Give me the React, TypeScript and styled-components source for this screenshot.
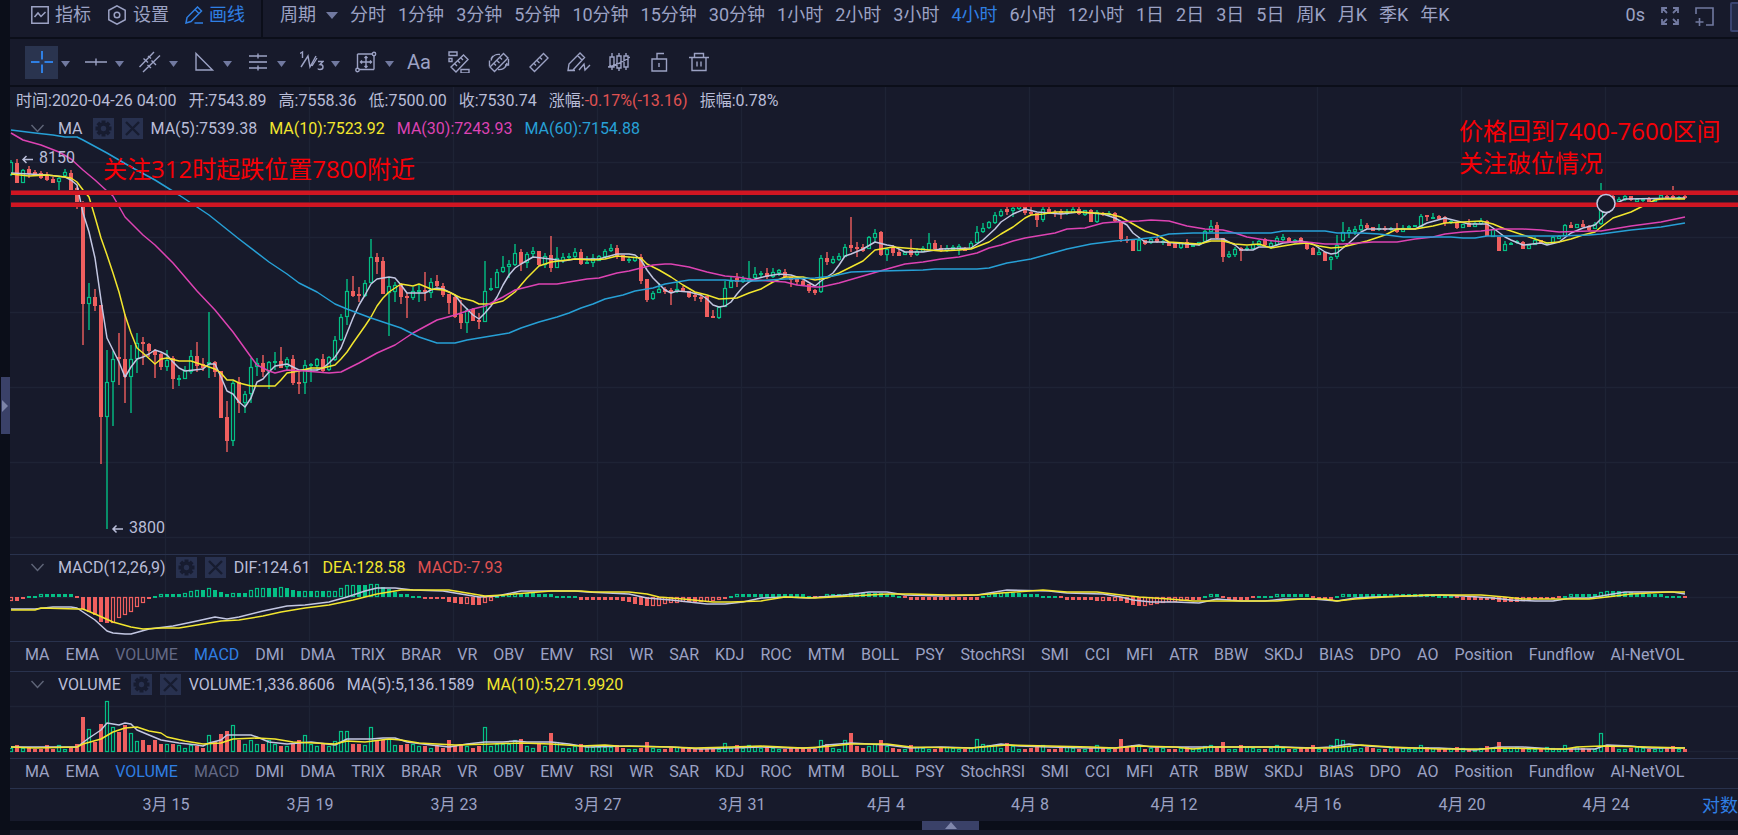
import React from "react";
import styled, { createGlobalStyle } from "styled-components";

const c = {
  bg: "#171a2b",
  dark: "#0b0e19",
  grid: "#1e2335",
  line: "#29324d",
  text: "#b9bdd8",
  muted: "#9ca2c4",
  dim: "#636985",
  caret: "#7179a0",
  blue: "#2f7fe3",
  chip: "#28314f",
  handle: "#3a4168",
  green: "#04bf85",
  red: "#ef5f5f",
  white: "#c3c7e2",
  yellow: "#f2e62e",
  pink: "#dd43b3",
  cyan: "#27a0d6",
  band: "#d01622",
};

/* ---------- chart data ---------- */

// One candle per entry: colour, body top, body bottom, high, low.
const CANDLES = `
g162,175,160,176 r163,183,159,183 g170,183,169,183 r169,174,166,178 r172,174,170,175 r173,178,171,179 r176,180,172,181 r179,183,177,183
g178,182,176,190 g172,176,169,178 r173,190,170,191 r188,204,187,209 r202,304,201,345 g297,304,283,330 r297,306,289,311 r305,417,305,464
g382,417,350,529 g359,382,351,426 r357,359,333,385 r359,377,314,403 g359,377,345,413 g343,359,333,373 r342,344,337,365 r344,351,343,357
r351,355,349,378 r354,367,353,370 g360,367,350,371 r358,379,356,389 g378,380,375,386 g370,379,366,379 g356,372,350,374 r356,366,342,372
r364,368,358,371 g362,364,312,378 r362,372,361,377 r371,418,371,418 r417,441,401,452 g383,441,381,446 r382,403,377,413 g394,403,391,413
g367,394,358,403 g363,367,358,376 r363,372,355,377 g362,372,361,389 g361,363,352,370 r361,368,347,368 g359,367,357,370 r359,383,355,385
r382,384,370,394 g365,383,360,394 g364,366,363,382 g359,366,358,371 r359,371,354,372 g357,370,356,371 g340,360,336,361 g317,340,314,341
g291,317,279,325 r291,296,276,297 r294,296,287,302 g283,296,280,297 g257,283,239,283 r257,262,253,274 r261,294,257,294 g286,293,277,336
g285,292,282,302 r285,297,283,304 r296,298,293,318 g291,298,287,300 g290,292,285,302 r290,292,272,301 g282,293,278,298 r281,286,275,287
r286,295,283,297 r294,303,294,314 r297,317,295,318 r314,323,300,329 g310,323,308,333 r309,321,308,321 r320,322,313,329 g291,322,261,322
g288,290,278,291 g272,288,269,288 g267,272,256,273 g264,267,260,278 g253,265,244,266 r252,264,249,271 g254,263,252,268 g251,254,247,258
r251,265,251,266 g256,265,253,268 r255,268,236,272 g258,268,247,268 g257,261,253,263 g256,258,253,260 g252,257,248,258 r252,264,249,265
g262,264,256,264 g258,263,254,267 g256,261,255,261 g251,257,249,257 g248,251,244,252 r248,256,245,259 r255,261,255,261 g259,261,257,263
g257,261,257,262 r257,281,254,284 r279,300,279,302 g293,299,291,300 g289,293,283,293 r289,292,287,294 r290,293,288,305 g289,292,282,293
r288,291,286,292 r291,297,291,298 r295,297,292,301 r297,299,294,302 r296,317,296,317 r316,318,310,318 g307,318,306,319 g288,307,281,307
g281,288,277,288 r278,282,273,287 g279,282,276,283 g278,281,261,281 g274,278,267,278 g273,275,271,277 r273,277,268,279 g272,277,268,278
g270,273,269,276 r272,277,269,278 r277,280,277,287 r279,282,278,285 r281,285,280,285 r284,291,284,293 r290,293,289,295 g258,292,255,293
r258,262,252,265 g259,263,256,264 g256,260,253,261 g247,257,244,257 r245,248,217,252 r247,249,242,257 r247,251,244,252 g237,249,236,249
g233,238,229,242 r232,255,231,256 g249,255,248,261 r248,253,245,256 r252,256,249,256 g252,255,252,255 r250,255,239,257 g251,255,248,256
g248,252,246,252 g243,250,233,250 r243,249,240,250 r248,251,245,252 g248,251,245,252 g247,250,245,251 g246,250,244,255 r248,251,247,251
g243,249,241,249 g232,243,226,243 g228,232,223,233 g222,228,221,229 g215,223,212,224 g211,216,209,217 r209,212,203,215 g208,211,205,217
g206,209,204,210 r206,213,202,215 r212,214,207,215 r213,220,213,227 g209,220,207,222 r209,213,207,214 r212,214,210,217 r211,214,209,219
g212,214,209,215 g209,213,207,213 r209,214,207,215 g210,215,210,216 r210,222,209,222 g212,222,210,223 r213,215,212,216 g213,215,211,216
r213,221,212,222 r221,239,221,242 r239,241,236,243 r240,251,240,251 g240,251,237,251 r240,244,240,245 g239,243,238,244 r239,242,237,243
g241,243,240,245 r242,246,242,246 r243,248,243,248 g243,248,242,249 r242,248,239,248 g245,247,245,247 g242,245,242,246 g231,242,230,242
g226,232,220,232 r225,238,222,239 r238,257,238,262 g254,257,251,258 g249,255,247,257 r248,251,247,261 g248,250,246,251 g244,249,241,249
g241,246,240,246 r239,245,238,246 g243,247,241,249 g238,245,236,245 g237,240,234,241 r238,243,237,243 g240,243,239,244 r238,243,237,244
r243,249,242,250 r248,255,247,255 g252,255,248,255 r252,261,252,261 g257,260,256,270 g245,257,235,259 g232,241,222,242 g230,233,227,238
g229,232,226,235 g225,230,219,231 r225,228,223,229 r227,231,227,231 g228,230,224,231 r228,230,226,231 g228,230,227,231 r229,232,223,233
g228,232,225,232 g226,228,225,229 g225,227,225,227 g216,227,214,227 r215,217,215,221 g217,219,213,219 r216,219,215,219 r217,223,216,226
g221,223,220,224 r222,228,222,229 g224,228,224,228 r223,227,219,227 g223,227,222,227 g221,224,218,225 r221,236,220,236 g229,237,229,237
r237,251,237,251 g244,251,241,251 g243,245,242,245 g241,243,240,244 r242,249,241,249 g245,249,245,249 g240,245,237,245 r240,243,240,243
g242,244,242,244 g237,243,236,243 g236,239,235,239 g225,236,224,236 r225,228,222,228 g224,228,224,228 r224,227,220,227 r226,230,225,231
g224,229,222,229 g204,224,183,225 r199,203,196,204 r196,200,195,202 g199,202,197,203 g196,200,195,201 r196,200,196,201 g199,202,198,202
g199,201,198,202 r199,202,197,202 g199,202,198,203 g195,200,194,200 r196,199,195,199 r196,199,186,200 g197,199,196,200 r196,198,195,199`
  .trim()
  .split(/\s+/)
  .map((s) => {
    const [top, bottom, high, low] = s.slice(1).split(",").map(Number);
    return { up: s[0] === "g", top, bottom, high, low };
  });

type Pairs = string;

const MA5: Pairs =
  "0,173 6,175 9,177 10,180 11,185 12,213 13,232 14,258 15,300 16,338 17,350 18,362 19,377 20,367 21,359 22,357 23,354 24,350 25,352 26,355 27,362 28,368 29,371 32,369 33,364 34,364 35,377 36,391 37,394 38,402 39,407 40,398 41,382 42,379 43,372 44,366 46,364 47,367 48,370 51,370 52,368 53,363 54,357 55,348 56,333 57,318 58,305 59,295 60,284 61,279 63,277 64,278 65,285 66,293 69,293 70,290 71,288 72,289 73,292 74,295 75,303 76,309 77,315 78,319 79,313 80,306 81,297 82,285 83,275 84,268 85,264 87,257 90,259 92,261 94,259 98,259 101,254 103,254 104,255 105,260 106,270 107,278 108,284 109,290 110,293 111,291 113,292 115,295 116,299 117,305 118,307 119,306 120,302 121,294 122,287 123,282 124,279 126,276 128,274 130,275 132,279 134,286 135,281 136,277 137,273 138,265 139,256 140,254 142,249 144,242 146,245 147,246 149,252 152,252 155,249 160,248 162,240 164,229 165,222 167,214 169,209 171,212 175,214 178,212 182,214 184,218 186,225 187,233 189,242 192,242 194,243 198,245 200,239 202,239 204,245 205,250 207,250 208,247 210,247 212,243 215,241 217,244 219,252 220,254 221,253 223,243 225,232 226,229 234,229 236,223 239,218 241,221 243,224 246,224 247,228 249,237 250,240 252,245 255,243 256,245 258,242 260,233 262,228 264,225 265,219 266,213 267,208 268,202 269,199 279,198";
const MA10: Pairs =
  "0,174 3,176 6,175 9,177 10,178 11,182 12,190 13,197 14,217 15,238 16,255 17,273 18,292 19,315 20,333 21,348 22,353 24,364 25,359 26,358 28,361 30,361 32,365 34,369 35,373 36,380 37,380 38,383 40,386 44,386 45,380 46,373 48,371 50,368 52,368 54,365 55,359 56,352 57,343 59,326 60,317 61,306 62,298 63,292 65,284 67,286 68,284 70,289 72,290 73,292 75,298 77,301 78,304 80,304 82,301 84,292 86,278 88,266 90,262 94,259 97,260 99,259 101,256 103,257 105,258 106,264 108,270 110,277 112,285 114,292 116,295 118,299 121,298 123,293 125,289 127,282 129,277 132,277 134,280 136,278 138,273 140,267 142,261 144,250 147,247 149,248 153,250 155,251 158,250 160,249 163,242 165,234 167,227 169,218 170,215 172,214 174,212 178,212 183,214 185,217 187,224 189,231 191,235 193,242 198,244 200,241 202,241 204,244 206,245 208,244 210,248 212,246 214,244 216,243 218,246 220,248 222,247 224,244 226,241 229,235 231,229 234,229 237,226 239,223 242,222 245,221 247,224 249,229 251,233 253,237 256,243 258,242 260,239 262,235 264,232 265,227 267,218 270,212 272,206 274,200 275,199 279,199";
const MA30: Pairs =
  "0,133 2,140 5,145 8,152 10,159 12,170 14,180 16,191 17,196 19,217 22,235 24,245 27,263 31,291 34,310 37,332 40,357 41,365 43,371 44,373 46,370 49,371 53,373 55,372 58,363 61,353 64,345 67,333 71,320 74,315 77,309 79,306 82,297 84,290 88,284 91,284 93,282 96,279 98,278 101,273 103,271 105,268 107,265 109,264 110,264 113,267 116,272 119,276 121,277 124,280 129,282 131,285 134,287 135,287 138,283 142,276 146,269 149,264 152,262 155,259 158,257 161,253 163,248 165,245 167,241 169,238 171,236 174,233 176,229 179,228 182,223 184,222 188,221 190,220 193,221 196,226 199,229 202,230 204,233 206,237 209,240 212,242 216,242 219,244 222,244 227,242 231,242 234,239 237,237 239,234 242,232 245,231 248,229 252,229 255,230 258,232 263,231 265,231 270,226 275,222 279,217";
const MA60: Pairs =
  "0,130 4,133 7,135 9,137 11,137 12,140 16,153 20,167 24,180 28,195 33,215 38,239 43,262 46,274 48,283 51,292 54,304 56,309 60,318 62,322 65,328 68,337 70,341 71,343 74,343 76,340 80,336 83,333 85,328 88,322 91,317 93,313 95,308 97,304 99,299 102,295 104,291 107,288 109,284 111,282 113,280 119,280 121,281 124,281 129,279 134,278 137,276 140,272 145,271 152,270 154,269 161,269 163,268 166,263 170,259 173,254 176,249 180,244 184,241 188,239 191,237 193,234 197,233 210,233 212,231 219,231 221,233 225,233 228,234 232,237 240,237 242,238 244,238 246,236 258,236 263,235 265,234 270,230 275,227 279,223";

const DIF: Pairs =
  "0,609 4,609 7,607 10,607 11,608 14,620 16,631 17,633 19,634 20,634 23,629 27,626 31,621 34,617 36,619 38,617 42,611 46,606 49,605 53,602 56,597 59,591 61,588 64,588 67,590 72,591 75,594 78,597 81,596 85,591 94,591 96,592 103,594 106,598 110,600 116,604 119,604 122,602 125,598 129,597 133,598 139,595 143,592 146,592 149,595 155,596 161,595 166,590 173,591 176,593 182,594 185,597 187,600 190,602 194,602 198,603 201,599 205,601 209,601 212,599 217,599 221,601 224,598 227,597 233,596 238,595 242,596 247,598 250,600 254,601 257,601 260,598 263,598 266,595 269,592 277,592 279,594";
const DEA: Pairs =
  "0,610 4,610 5,608 11,609 12,609 14,614 17,622 20,627 22,629 25,628 28,628 31,625 35,621 38,620 42,616 45,612 49,608 53,605 57,600 61,594 63,592 65,590 73,590 76,593 79,596 82,595 88,592 90,591 95,591 97,592 103,592 106,594 108,597 112,599 117,602 120,602 125,601 129,597 134,598 140,596 146,594 150,594 156,595 161,595 165,593 172,590 176,592 181,592 185,595 188,597 193,599 197,601 211,601 215,599 219,599 221,601 224,599 229,597 236,595 245,595 249,597 252,599 263,599 266,597 270,594 276,592 279,592";

const VMA5: Pairs =
  "0,747 11,747 13,738 15,730 16,723 18,725 19,723 20,724 21,730 25,740 28,743 31,745 32,746 33,743 35,740 36,735 40,735 41,737 43,742 46,744 50,742 54,745 56,739 60,739 62,738 64,738 66,742 70,745 73,747 76,744 79,742 82,742 84,741 86,742 90,742 93,744 96,747 103,746 110,747 115,749 120,748 125,747 130,748 134,748 136,745 140,743 146,745 150,748 155,747 160,748 163,746 165,744 168,746 173,747 180,748 184,748 188,745 190,747 202,747 212,747 217,748 220,747 223,744 226,746 232,748 238,748 244,750 248,747 252,747 257,749 264,749 266,745 270,746 273,748 279,748";
const VMA10: Pairs =
  "0,747 4,748 11,747 12,744 15,739 17,732 19,728 21,727 23,731 25,733 26,737 29,741 32,744 35,743 37,739 41,738 44,739 47,742 54,744 56,741 59,742 63,739 65,740 68,743 74,745 80,744 85,743 90,744 95,746 99,745 101,746 110,747 114,748 120,747 125,746 132,748 135,747 140,744 146,744 150,747 160,748 166,745 173,746 180,747 184,748 188,746 194,747 197,749 200,747 211,747 215,748 220,748 225,745 230,747 238,749 245,749 248,748 257,749 259,749 261,747 265,746 273,747 279,748";

const VOLUME_HEAD = [
  4, 7, 4, 4, 3, 3, 7, 3, 7, 3, 4, 8, 35, 23, 10, 28, 51, 25, 20, 27, 19, 11, 12, 7, 12, 8, 8, 8, 7, 4, 7, 6, 4, 17, 10, 18, 21, 27,
  12, 8, 12, 8, 8, 12, 8, 6, 6, 8, 12, 17, 8, 6, 8, 6, 11, 21, 21, 8, 8, 7, 25, 12, 12, 13, 7, 7, 8, 8, 6, 6, 4, 6, 4, 12, 6, 8, 6,
  4, 6, 25, 6, 8, 8, 8, 12, 13, 6, 4, 8, 6, 19, 10, 4, 4, 6, 8, 6, 5, 5, 5, 5,
];
const VOLUME_PEAKS: Record<number, number> = {
  101: 7, 106: 10, 119: 9, 121: 7, 123: 7, 124: 6, 135: 12, 136: 8, 139: 12, 140: 19, 141: 6, 143: 6, 144: 8, 145: 12, 146: 6,
  150: 7, 161: 13, 162: 8, 163: 7, 164: 7, 166: 9, 167: 6, 172: 7, 181: 7, 185: 13, 187: 7, 188: 6, 199: 6, 200: 7, 202: 10, 205: 7,
  211: 7, 217: 7, 220: 7, 221: 13, 222: 12, 223: 6, 235: 7, 246: 6, 248: 10, 259: 7, 265: 19, 267: 5, 277: 6,
};
const volumeAt = (i: number) => VOLUME_HEAD[i] ?? VOLUME_PEAKS[i] ?? [4, 3, 5, 3, 4][(i * 7) % 5];

// Histogram as value x repeat count.
const HISTOGRAM = `-4x2 -2x1 1x2 3x6 -1x1 -12x1 -15x1 -18x1 -25x1 -26x1 -25.5x1 -21x1 -18x1 -15x1 -10x1 -6x1 -2x1 1x1 3x4 4x1 6x1 7x2 9x1 7x1 5x1
3x1 4x3 7x1 9x1 9.1x1 9x2 9.5x1 9x1 7x1 6x1 6.1x1 6x1 6.1x1 5.9x1 6x1 6.1x1 9x1 12x1 12.1x1 12x1 11.5x1 13x1 13.1x1 10x1 8x1 5x1 3x2 1x2 -2x4 -5x1 -6x1
-7x1 -6.8x1 -8x2 -6x1 -4x1 1x1 2x1 3x1 4x4 3x3 1x4 -3x7 -4x1 -5x1 -7x1 -8x1 -9x1 -8.8x1 -8.6x1 -7x1 -6x1 -5.8x1 -5x3 -4.8x1 -4.6x1 -4x1 -3x1 -2x1 1x1 3x12
1x1 -1x2 3x4 4x6 3x2 1x1 -1x1 -3x12 1x1 3x2 4x4 3x3 1x3 -1x1 -3x5 -4x1 -3.8x1 -4x1 -3.8x1 -4x1 -6x1 -8x1 -9x1 -8.8x1 -8x1 -7x1 -6x1 -5x1 -4.8x1 -4x1
-3x3 1x1 3x2 -1x1 -3x4 -1x1 1x3 3x6 -1x1 -3x3 1x1 3x16 1x3 -1x1 -3x6 -5x4 -4x2 -2x4 -1x1 1x1 3x5 5x1 6x3 5x2 4x2 3x3 1x3 -1x1`
  .trim()
  .split(/\s+/)
  .flatMap((s) => {
    const [value, count] = s.split("x").map(Number);
    return Array<number>(count).fill(value);
  })
  .slice(0, 280);

const STEP = 6;
const FIRST = 11;
const GRID_X = Array.from({ length: 11 }, (_, k) => 165 + k * 144);

const toPoints = (pairs: Pairs) =>
  pairs
    .split(" ")
    .map((p) => {
      const [i, y] = p.split(",").map(Number);
      return `${FIRST + i * STEP},${y}`;
    })
    .join(" ");

const INDICATORS = [
  "MA", "EMA", "VOLUME", "MACD", "DMI", "DMA", "TRIX", "BRAR", "VR", "OBV", "EMV", "RSI", "WR", "SAR", "KDJ", "ROC", "MTM", "BOLL",
  "PSY", "StochRSI", "SMI", "CCI", "MFI", "ATR", "BBW", "SKDJ", "BIAS", "DPO", "AO", "Position", "Fundflow", "AI-NetVOL",
];
const PERIODS = [
  "分时", "1分钟", "3分钟", "5分钟", "10分钟", "15分钟", "30分钟", "1小时", "2小时", "3小时", "4小时", "6小时", "12小时", "1日", "2日",
  "3日", "5日", "周K", "月K", "季K", "年K",
];
const DATES = ["3月 15", "3月 19", "3月 23", "3月 27", "3月 31", "4月 4", "4月 8", "4月 12", "4月 16", "4月 20", "4月 24"];

/* ---------- styled parts ---------- */

const Global = createGlobalStyle`
  * { box-sizing: border-box; }
  body { margin: 0; background: ${c.bg}; color: ${c.text}; font-family: Roboto, "Noto Sans CJK SC", sans-serif; font-size: 16px; overflow: hidden; }
  button { font: inherit; color: inherit; background: none; border: 0; padding: 0; margin: 0; cursor: pointer; white-space: nowrap; }
  svg { display: block; flex: none; }
`;

const Page = styled.div`
  display: flex;
  min-height: 100vh;
  overflow: hidden;
`;
const SideRail = styled.aside`
  flex: none;
  width: 10px;
  padding: 377px 0 0 1px;
  background: ${c.dark};
`;
const SideHandle = styled.button`
  display: flex;
  align-items: center;
  width: 9px;
  height: 57px;
  padding-left: 1px;
  background: ${c.handle};
`;
const Main = styled.main`
  flex: 1;
  min-width: 0;
`;
const TopBar = styled.header`
  display: flex;
  align-items: stretch;
  height: 39px;
  border-bottom: 2px solid ${c.dark};
  font-size: 18px;
  line-height: 26px;
  color: ${c.muted};
  overflow: hidden;
`;
const TopMenu = styled.nav`
  display: flex;
  align-items: flex-start;
  gap: 16px;
  padding: 2px 16px 0 21px;
  border-right: 2px solid ${c.dark};
`;
const TopButton = styled.button<{ $active?: boolean }>`
  display: flex;
  align-items: center;
  gap: 6px;
  color: ${(p) => (p.$active ? c.blue : c.muted)};
`;
const PeriodMenu = styled(TopButton)`
  gap: 10px;
`;
const Periods = styled.nav`
  display: flex;
  align-items: flex-start;
  gap: 12px;
  padding: 2px 0 0 17px;
`;
const TopRight = styled.div`
  display: flex;
  align-items: flex-start;
  gap: 16px;
  margin: 2px -32px 0 auto;
`;
const IconButton = styled.button`
  display: flex;
  align-items: center;
  height: 28px;
`;
const EdgeButton = styled.button`
  width: 40px;
  height: 30px;
  background: #232a45;
  border: 2px solid #3a4470;
  border-radius: 2px;
`;
const DrawBar = styled.div`
  display: flex;
  align-items: center;
  height: 48px;
  padding-left: 15px;
  border-bottom: 2px solid ${c.dark};
  color: ${c.muted};
`;
const ToolGroups = styled.div`
  display: flex;
  gap: 4px;
`;
const ToolGroup = styled.div`
  display: flex;
  align-items: center;
  width: 50px;
`;
const Tool = styled.button<{ $active?: boolean }>`
  display: flex;
  align-items: center;
  justify-content: center;
  width: 33px;
  height: 33px;
  background: ${(p) => (p.$active ? "#2a344f" : "none")};
  color: ${(p) => (p.$active ? c.blue : c.muted)};
`;
const WideTool = styled(Tool)`
  width: 40px;
  font-size: 20px;
`;
const CaretButton = styled.button`
  padding: 4px 3px 0;
`;
const Panel = styled.section<{ $height: number }>`
  position: relative;
  height: ${(p) => p.$height}px;
  border-bottom: 1px solid ${c.line};
  overflow: hidden;
`;
const Canvas = styled.svg`
  width: 100%;
  height: 100%;
`;
const Overlay = styled.div`
  position: absolute;
  top: 0;
  left: 0;
`;
const Quote = styled.p`
  display: flex;
  gap: 12px;
  margin: 0;
  padding: 2px 0 0 6px;
  line-height: 24px;
  white-space: nowrap;
`;
const Legend = styled.div<{ $top: number }>`
  display: flex;
  align-items: center;
  height: 22px;
  margin-top: ${(p) => p.$top}px;
  padding-left: 20px;
  white-space: nowrap;
`;
const LegendName = styled.span`
  margin: 0 10px 0 13px;
`;
const Chip = styled.button`
  display: flex;
  align-items: center;
  justify-content: center;
  width: 21px;
  height: 21px;
  margin-right: 8px;
  background: ${c.chip};
  color: #171c30;
`;
const Values = styled.span`
  display: flex;
  gap: 12px;
`;
const Value = styled.span<{ $color?: string }>`
  color: ${(p) => p.$color ?? c.text};
`;
const Note = styled.p<{ $left: number; $top: number }>`
  position: absolute;
  left: ${(p) => p.$left}px;
  top: ${(p) => p.$top}px;
  margin: 0;
  color: #f80006;
  font: 24px/32px "Open Sans", "Noto Sans CJK SC", sans-serif;
  white-space: nowrap;
`;
const Tabs = styled.nav`
  display: flex;
  align-items: center;
  gap: 16px;
  height: 30px;
  padding: 0 0 4px 15px;
  border-bottom: 1px solid ${c.line};
  overflow: hidden;
`;
const Tab = styled.button<{ $state: "on" | "used" | "off" }>`
  color: ${(p) => (p.$state === "on" ? c.blue : p.$state === "used" ? c.dim : c.muted)};
`;
const Axis = styled.div`
  display: flex;
  align-items: center;
  height: 32px;
  padding: 0 0 5px 84px;
  color: ${c.muted};
  overflow: hidden;
`;
const AxisLabel = styled.span`
  flex: none;
  width: 144px;
  text-align: center;
`;
const ScaleButton = styled.button`
  flex: none;
  margin-left: 24px;
  padding-top: 2px;
  color: ${c.blue};
  font-size: 18px;
`;
const BottomRail = styled.div`
  height: 9px;
  padding-left: 912px;
  background: ${c.dark};
`;
const BottomHandle = styled.button`
  display: flex;
  align-items: flex-end;
  justify-content: center;
  width: 57px;
  height: 9px;
  padding-bottom: 1px;
  background: ${c.handle};
`;

/* ---------- icons ---------- */

const Icon = ({ size = 22, w = 1.4, children }: { size?: number; w?: number; children: React.ReactNode }) => (
  <svg width={size} height={size} viewBox={`0 0 ${size} ${size}`} fill="none" stroke="currentColor" strokeWidth={w} aria-hidden="true">
    {children}
  </svg>
);
const Caret = ({ large }: { large?: boolean }) => (
  <svg width={large ? 12 : 9} height={large ? 7 : 6} viewBox="0 0 12 7" preserveAspectRatio="none" aria-hidden="true">
    <path d="M0 0h12L6 7z" fill={c.caret} />
  </svg>
);
const Ruler = () => <path d="M2 16 15.500 2.500l4.500 4.500L6.500 20.500zM6 12.500l2 2M9 9.500l2.500 2.500M12 6.500l2 2" />;

const TOOLS: [string, React.ReactNode][] = [
  ["光标", <path key="a" strokeWidth="2" d="M11 0v8.500M11 13.500V22M0 11h8.500M13.500 11H22" />],
  ["线段", <path key="b" d="M0 11h22M11 7.500v7M10 11h2" />],
  ["平行线", <path key="c" d="M.5 16 15 1M4 21 21 4.500M4.500 7.500l4.500 4M9 5l3 2.500M8.500 14l3.500 3M12.500 9.500l4.500 4.500" />],
  ["三角形", <path key="d" d="M3 2.500v16.500h16.500z" />],
  [
    "斐波那契",
    <g key="e">
      <path d="M2 5h18M2 17h18M11 2.500v5M11 14.500v5" />
      <path d="M2 11h18" strokeWidth="2" opacity=".8" />
    </g>,
  ],
  [
    "波浪",
    <g key="f">
      <path d="M0 3.500 2.500 2v6M1 17 8 6l2 11 6-11M12 16l5-8" />
      <path d="M18 11.500h5l-3 3c4 0 4 5 0 5-2 0-2-1-2-1" />
    </g>,
  ],
  [
    "矩形",
    <g key="g">
      <path d="M2.500 3h15M2.500 3v14M19 5v13.500M4 18.500h15M11 5.500v11M5.500 11h11M9.500 7 11 5.500 12.500 7M9.500 15l1.500 1.500 1.500-1.500M7 9.500 5.500 11 7 12.500M15 9.500l1.500 1.500-1.500 1.500" />
      <circle cx="19" cy="3" r="1.700" />
      <circle cx="2.500" cy="19" r="1.700" />
    </g>,
  ],
];

const ACTIONS: [string, React.ReactNode][] = [
  ["测量", <path key="a" d="M3 16 15.500 4l4.500 4.500L8 21zM7 13l2 2M10 10l2 2M13 7l2 2M1 1h8v3.500H1zM1 7.500h3v3H1zM13 18.500h8V22h-8z" />],
  [
    "区间",
    <g key="b">
      <Ruler />
      <path d="M3 9.500C4 5 8 3 12 3.500M19 12c-1 5-5 7-9 6.500M20.500 8v6h-3.500M1.500 9.500v6M5 5l-2 3" />
    </g>,
  ],
  ["标尺", <Ruler key="c" />],
  ["画笔", <path key="d" d="M1 20.500 2 14 13 3l4.500 4.500L6 20zM10.500 5.500 15 10M1 20.500h7M12 20l5-6 1 6 5-5" />],
  ["磁吸", <path key="e" d="M2 6h4v10H2zM9 5h4v12H9zM16 5h4v11h-4zM4 2v4M4 16v3M11 2v3M11 17v3M18 2v3M18 16v3M0 16c8-2 14-4 22-10" />],
  ["锁定", <path key="f" d="M4 8h14.500v12H4zM9 8V2.500h7M11 12v4" />],
  ["删除", <path key="g" d="M1 6.500h20M4 6.500V19.500h14v-13M6.500 6.500v-4h9v4M9 10.500v5M13 10.500v5" />],
];

const Gear = () => (
  <svg width="17" height="17" viewBox="-8.500 -8.500 17 17" aria-hidden="true">
    <g fill="currentColor">
      {[0, 45, 90, 135].map((a) => (
        <rect key={a} x="-2" y="-8" width="4" height="16" transform={`rotate(${a})`} />
      ))}
      <circle r="6" />
    </g>
    <circle r="2.700" fill={c.chip} />
  </svg>
);
const Cross = () => (
  <Icon size={15} w={2.4}>
    <path d="M1 1l13 13M14 1 1 14" />
  </Icon>
);

/* ---------- chart pieces ---------- */

const Grid = ({ top, bottom, rows }: { top: number; bottom: number; rows: number[] }) => (
  <g stroke={c.grid} strokeWidth="1.300">
    {GRID_X.map((x) => (
      <line key={x} x1={x + 0.5} x2={x + 0.5} y1={top} y2={bottom} />
    ))}
    {rows.map((y) => (
      <line key={y} x1="0" x2="100%" y1={y + 0.5} y2={y + 0.5} transform="translate(10 0)" />
    ))}
  </g>
);
const Series = ({ data, color }: { data: Pairs; color: string }) => (
  <polyline points={toPoints(data)} fill="none" stroke={color} strokeWidth="1.500" strokeLinejoin="round" />
);
const Bar = ({ i, y, h, color, hollow }: { i: number; y: number; h: number; color: string; hollow: boolean }) => {
  const x = FIRST - 2 + i * STEP;
  return hollow && h > 2 ? (
    <rect x={x + 0.5} y={y + 0.5} width="3" height={h - 1} fill={c.bg} stroke={color} strokeWidth="1.200" />
  ) : (
    <rect x={x} y={y} width="4" height={Math.max(h, 2)} fill={color} />
  );
};

const PriceChart = () => (
  <Canvas role="img" aria-label="K线">
    <g transform="translate(-10 -87)">
      <Grid top={87} bottom={554} rows={[162, 237, 312, 387, 462, 537]} />
      {CANDLES.map((k, i) => {
        const color = k.up ? c.green : c.red;
        return (
          <g key={i}>
            <rect x={FIRST - 0.7 + i * STEP} y={k.high} width="1.400" height={k.low - k.high} fill={color} />
            <Bar i={i} y={k.top} h={k.bottom - k.top} color={color} hollow={k.up} />
          </g>
        );
      })}
      <Series data={MA5} color={c.white} />
      <Series data={MA10} color={c.yellow} />
      <Series data={MA30} color={c.pink} />
      <Series data={MA60} color={c.cyan} />
      <g fill={c.text} fontSize="16">
        <text x="39" y="163">8150</text>
        <text x="129" y="533">3800</text>
      </g>
      <path d="M33 159.500H23M26.500 156l-3.500 3.500 3.500 3.500M123 529H113M116.500 525.500 113 529l3.500 3.500" fill="none" stroke={c.text} strokeWidth="1.500" />
      {[190, 202].map((y) => (
        <g key={y} transform="translate(11 0)">
          <rect y={y} width="100%" height="1" fill="#74182a" />
          <rect y={y + 1} width="100%" height="4" fill={c.band} />
        </g>
      ))}
      <circle cx="1606" cy="203.500" r="9" fill={c.bg} stroke={c.white} strokeWidth="1.500" />
    </g>
  </Canvas>
);

const MacdChart = () => (
  <Canvas role="img" aria-label="MACD">
    <g transform="translate(-10 -555)">
      <Grid top={555} bottom={641} rows={[597]} />
      {HISTOGRAM.map((v, i) => {
        const hollow = i > 0 ? v > HISTOGRAM[i - 1] : true;
        if (Math.abs(v) < 2) return <Bar key={i} i={i} y={596} h={2} color={v > 0 ? c.green : c.red} hollow={false} />;
        const h = Math.round(Math.abs(v));
        return <Bar key={i} i={i} y={v > 0 ? 597 - h : 597} h={h} color={v > 0 ? c.green : c.red} hollow={hollow} />;
      })}
      <Series data={DIF} color={c.white} />
      <Series data={DEA} color={c.yellow} />
    </g>
  </Canvas>
);

const VolumeChart = () => (
  <Canvas role="img" aria-label="VOLUME">
    <g transform="translate(-10 -672)">
      <Grid top={672} bottom={758} rows={[706, 751]} />
      {CANDLES.map((k, i) => (
        <Bar key={i} i={i} y={752 - volumeAt(i)} h={volumeAt(i)} color={k.up ? c.green : c.red} hollow={k.up} />
      ))}
      <Series data={VMA5} color={c.white} />
      <Series data={VMA10} color={c.yellow} />
    </g>
  </Canvas>
);

const LegendRow = ({ name, top, values }: { name: string; top: number; values: [string, string?][] }) => (
  <Legend $top={top}>
    <svg width="15" height="9" viewBox="0 0 15 9" aria-hidden="true">
      <path d="M1.500 1l6 6.500 6-6.500" fill="none" stroke="#5f6578" strokeWidth="1.400" />
    </svg>
    <LegendName>{name}</LegendName>
    <Chip aria-label={`${name} 设置`}>
      <Gear />
    </Chip>
    <Chip aria-label={`${name} 关闭`}>
      <Cross />
    </Chip>
    <Values>
      {values.map(([text, color]) => (
        <Value key={text} $color={color}>
          {text}
        </Value>
      ))}
    </Values>
  </Legend>
);

const IndicatorTabs = ({ active, used }: { active: string; used: string }) => (
  <Tabs>
    {INDICATORS.map((name) => (
      <Tab key={name} $state={name === active ? "on" : name === used ? "used" : "off"}>
        {name}
      </Tab>
    ))}
  </Tabs>
);

export default function App() {
  return (
    <Page>
      <Global />
      <SideRail>
        <SideHandle aria-label="展开侧栏">
          <svg width="6" height="12" viewBox="0 0 6 12" aria-hidden="true">
            <path d="M0 0v12l6-6z" fill="#7c84a8" />
          </svg>
        </SideHandle>
      </SideRail>
      <Main>
        <TopBar>
          <TopMenu>
            <TopButton>
              <Icon size={18} w={1.5}>
                <path d="M.8.8h16.400v16.400H.8zM3.500 11l3.500-4 3 3.500 4.500-4.500" />
              </Icon>
              指标
            </TopButton>
            <TopButton>
              <Icon size={20} w={1.5}>
                <path d="M10 .8 18.200 5.300v9.400L10 19.200 1.800 14.700V5.300z" />
                <circle cx="10" cy="10" r="2.800" />
              </Icon>
              设置
            </TopButton>
            <TopButton $active>
              <Icon size={18} w={1.5}>
                <path d="M1 17l1-5.500L12.500 1l4 4L6 15.500 1 17zM10 3.500l4 4M9.500 17H18" />
              </Icon>
              画线
            </TopButton>
          </TopMenu>
          <Periods>
            <PeriodMenu>
              周期
              <Caret large />
            </PeriodMenu>
            {PERIODS.map((p) => (
              <TopButton key={p} $active={p === "4小时"}>
                {p}
              </TopButton>
            ))}
          </Periods>
          <TopRight>
            <span>0s</span>
            <IconButton aria-label="全屏">
              <Icon size={18} w={1.8}>
                <path d="M1 6V1h5M1 1l5 5M12 1h5v5M17 1l-5 5M1 12v5h5M1 17l5-5M17 12v5h-5M17 17l-5-5" stroke={c.caret} />
              </Icon>
            </IconButton>
            <IconButton aria-label="新增">
              <Icon size={19} w={1.6}>
                <path d="M1 7V1h17v17h-7M4.500 11v8M.5 15h8" stroke={c.caret} />
              </Icon>
            </IconButton>
            <EdgeButton aria-label="更多" />
          </TopRight>
        </TopBar>
        <DrawBar>
          <ToolGroups>
            {TOOLS.map(([name, shape], i) => (
              <ToolGroup key={name}>
                <Tool $active={i === 0} aria-label={name}>
                  <Icon size={i === 5 ? 24 : 22}>{shape}</Icon>
                </Tool>
                <CaretButton aria-label={`${name} 选项`}>
                  <Caret />
                </CaretButton>
              </ToolGroup>
            ))}
          </ToolGroups>
          <WideTool>Aa</WideTool>
          {ACTIONS.map(([name, shape]) => (
            <WideTool key={name} aria-label={name}>
              <Icon size={name === "画笔" ? 24 : 22}>{shape}</Icon>
            </WideTool>
          ))}
        </DrawBar>
        <Panel $height={468}>
          <PriceChart />
          <Overlay>
            <Quote>
              <span>时间:2020-04-26 04:00</span>
              <span>开:7543.89</span>
              <span>高:7558.36</span>
              <span>低:7500.00</span>
              <span>收:7530.74</span>
              <span>
                涨幅:<Value $color="#e05252">-0.17%(-13.16)</Value>
              </span>
              <span>振幅:0.78%</span>
            </Quote>
            <LegendRow
              name="MA"
              top={4}
              values={[["MA(5):7539.38"], ["MA(10):7523.92", c.yellow], ["MA(30):7243.93", c.pink], ["MA(60):7154.88", c.cyan]]}
            />
          </Overlay>
          <Note $left={93} $top={66}>
            关注312时起跌位置7800附近
          </Note>
          <Note $left={1449} $top={28}>
            价格回到7400-7600区间
            <br />
            关注破位情况
          </Note>
        </Panel>
        <Panel $height={87}>
          <MacdChart />
          <Overlay>
            <LegendRow name="MACD(12,26,9)" top={1} values={[["DIF:124.61"], ["DEA:128.58", c.yellow], ["MACD:-7.93", "#e05252"]]} />
          </Overlay>
        </Panel>
        <IndicatorTabs active="MACD" used="VOLUME" />
        <Panel $height={87}>
          <VolumeChart />
          <Overlay>
            <LegendRow name="VOLUME" top={1} values={[["VOLUME:1,336.8606"], ["MA(5):5,136.1589"], ["MA(10):5,271.9920", c.yellow]]} />
          </Overlay>
        </Panel>
        <IndicatorTabs active="VOLUME" used="MACD" />
        <Axis>
          {DATES.map((d) => (
            <AxisLabel key={d}>{d}</AxisLabel>
          ))}
          <ScaleButton>对数</ScaleButton>
        </Axis>
        <BottomRail>
          <BottomHandle aria-label="展开底栏">
            <svg width="12" height="7" viewBox="0 0 12 7" aria-hidden="true">
              <path d="M0 7h12L6 0z" fill="#8087ac" />
            </svg>
          </BottomHandle>
        </BottomRail>
      </Main>
    </Page>
  );
}
